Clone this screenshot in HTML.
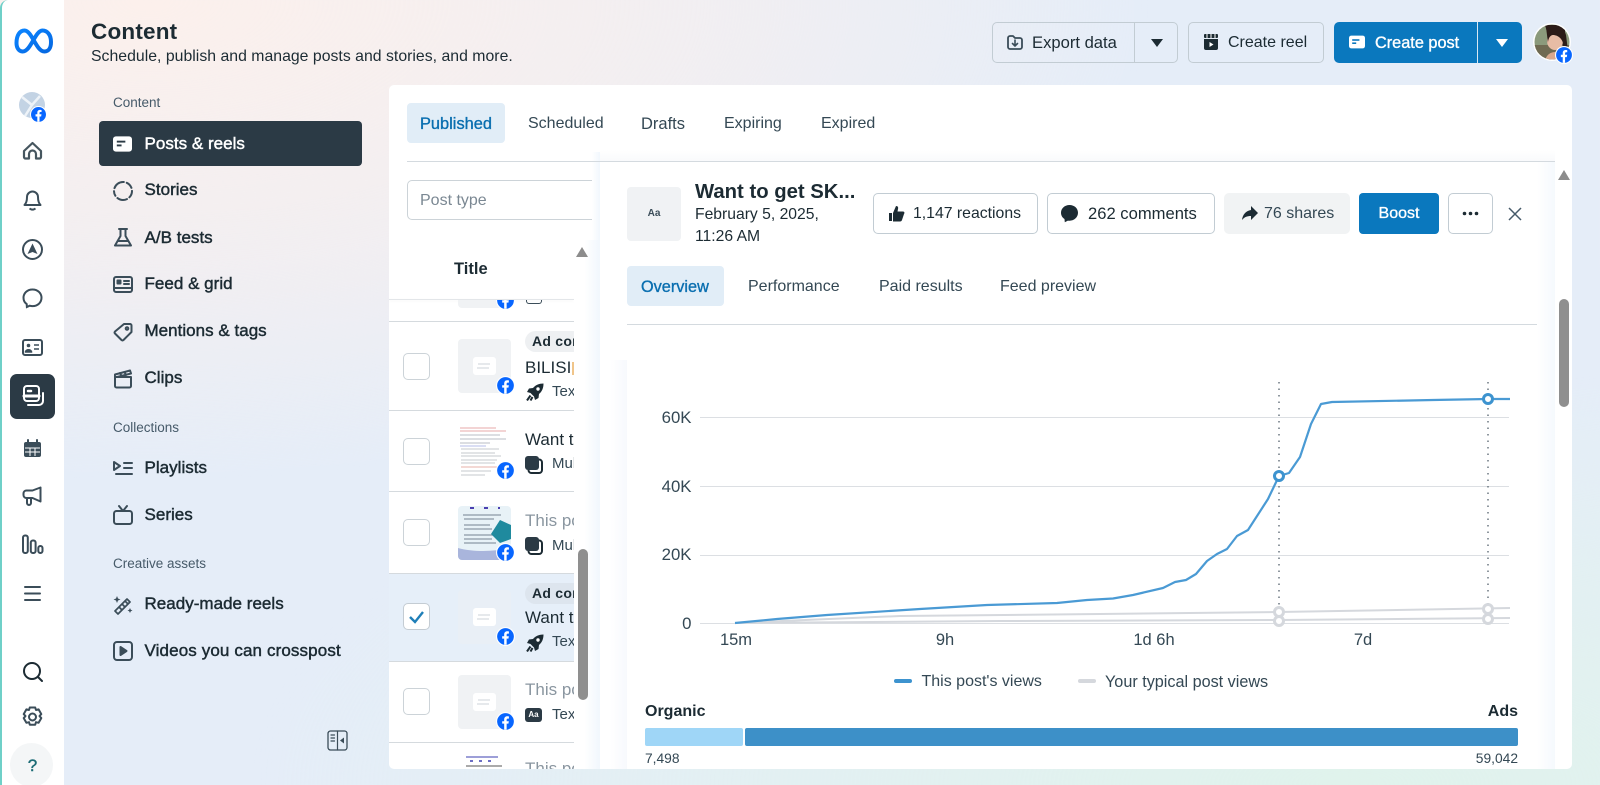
<!DOCTYPE html>
<html lang="en">
<head>
<meta charset="utf-8">
<title>Content</title>
<style>
html,body{margin:0;padding:0;width:1600px;height:785px;overflow:hidden}
body{position:relative;font-family:"Liberation Sans",sans-serif;color:#1c2b33;
background:radial-gradient(ellipse 1000px 480px at 150px 0,#fcf0ec 0%,rgba(252,240,236,.55) 55%,rgba(252,240,236,0) 100%),radial-gradient(ellipse 1100px 420px at 1350px 785px,#e0f3ec 0%,rgba(224,243,236,0) 100%),#e5edf8}
div,span,svg{position:absolute;box-sizing:border-box}
.t{white-space:nowrap;line-height:20px;height:20px}
.m{-webkit-text-stroke:.35px currentColor}
.nav{left:144.500px;font-size:17px;font-weight:400;-webkit-text-stroke:.45px #1c2b33;letter-spacing:.02px}
.lab{left:113px;font-size:13.500px;color:#465a69}
.btn{border:1px solid #c2ccd3;border-radius:5px;height:41px;top:22px}
.tab{font-size:16px;color:#344854}
.ic{fill:none;stroke:#3b4d59;stroke-width:2;stroke-linecap:round;stroke-linejoin:round;overflow:visible}
.cb{left:403px;width:27px;height:27px;border:1px solid #ccd3d8;border-radius:5px;background:#fff}
.th{left:458px;width:53px;height:54px;background:#f0f2f4;border-radius:4px}
.th i{position:absolute;left:15px;top:18px;width:23px;height:18px;background:#fff;border-radius:3px;display:block}
.th i:before{content:"";position:absolute;left:5px;top:6px;width:12px;height:2px;background:#e6e9ec;box-shadow:-1px 4px 0 -0px #e6e9ec}
.rl{left:389px;width:185px;height:1px;background:#d5dade}
.pill{left:525px;width:70px;height:21px;background:#eef0f2;border-radius:11px;font-size:14px;font-weight:700;padding-left:7px;line-height:20px;white-space:nowrap;color:#1c2b33;letter-spacing:.25px}
.rt{left:525px;font-size:17px;color:#1c2b33}
.rs{left:552px;font-size:15px;color:#344854}
.gy{color:#8a96a0}
.ay{right:908.500px;font-size:16.800px;color:#344854;text-align:right}
.ax{font-size:16.500px;color:#344854;text-align:center;width:80px}
.grid{left:700px;width:809px;height:1px;background:#dcdfe3}
</style>
</head>
<body>
<svg width="0" height="0" style="left:0;top:0">
<defs>
<symbol id="fb" viewBox="0 0 20 20"><circle cx="10" cy="10" r="10" fill="#fff"/><circle cx="10" cy="10" r="8.800" fill="#0866ff"/><path d="M8.600 18.700v-6.400H6.500V9.700h2.100V8c0-2.300 1.200-3.500 3.300-3.500.7 0 1.400.1 1.700.2v2.300h-1.200c-1 0-1.200.5-1.200 1.300v1.400h2.300l-.4 2.600h-1.900v6.400z" fill="#fff"/></symbol>
<symbol id="post" viewBox="0 0 20 16"><rect x="0" y="0" width="20" height="16" rx="3" fill="currentColor"/><rect x="4" y="4.500" width="9" height="2" fill="var(--c,#2b3a45)"/><rect x="4" y="8.500" width="5" height="2" fill="var(--c,#2b3a45)"/></symbol>
<symbol id="rocket" viewBox="0 0 18 18"><path d="M17.500.5c-4.500 0-8 1.500-10.500 4.500L3 5.500 1 9l3.500 1L8 13.500l1 3.500 3.500-2 .5-4c3-2.500 4.500-6 4.500-10.500z" fill="#1c2b33"/><circle cx="12" cy="6" r="1.700" fill="#fff"/><path d="M4.500 12.500L1 17.500M6.500 14L4.500 17.500" stroke="#1c2b33" stroke-width="2"/></symbol>
<symbol id="multi" viewBox="0 0 18 18"><rect x="3.500" y="3.500" width="13.500" height="13.500" rx="3" fill="#fff" stroke="#1c2b33" stroke-width="2"/><rect x="0" y="0" width="14" height="14" rx="3" fill="#2b3a45"/></symbol>
</defs>
</svg>

<!-- left rail -->
<div style="left:0;top:0;width:64px;height:785px;background:#fff;border-left:2px solid #6fd0c8;border-top-left-radius:8px"></div>
<svg style="left:0;top:0" width="64" height="785" fill="none">
<defs><linearGradient id="mg" x1="0" y1="0" x2="1" y2="1"><stop offset="0" stop-color="#0a84ff"/><stop offset="1" stop-color="#0668e1"/></linearGradient></defs>
<path d="M16.500 43C16.500 35 20 30.500 24.500 30.500C32 30.500 36 51.500 44.500 51.500C48.500 51.500 51 48 51 42C51 35 47.500 30.500 42.500 30.500C35 30.500 31 51.500 22.500 51.500C19 51.500 16.500 48 16.500 43Z" stroke="url(#mg)" stroke-width="4"/>
<circle cx="32" cy="105" r="13" fill="#c3d3e4"/>
<path d="M22 97l10 8 8-9M32 105l-7 11" stroke="#eef3f8" stroke-width="2.500"/>
<path d="M24 151L32.500 143L41 151V157a1.500 1.500 0 0 1-1.500 1.500H36V154a3.500 3.500 0 0 0-7 0v4.500H25.500A1.500 1.500 0 0 1 24 157Z" stroke="#46565f" stroke-width="2.200" stroke-linejoin="round"/>
<path d="M24.500 205c2-2 2.500-4 2.500-8a5.500 5.500 0 0 1 11 0c0 4 .5 6 2.500 8zM29.500 208.500c2 1.500 4 1.500 6 0" stroke="#3b4d59" stroke-width="2" stroke-linejoin="round"/>
<circle cx="32.500" cy="249.500" r="9.500" stroke="#3b4d59" stroke-width="2"/><path d="M32.500 243.500l5 10.500-5-2-5 2z" fill="#3b4d59"/>
<path d="M32.500 289.500c-5.200 0-9 3.600-9 8.300 0 2.700 1.200 4.900 3.200 6.300l.2 2.900 2.800-1.300c.9.300 1.800.4 2.800.4 5.200 0 9-3.600 9-8.300s-3.800-8.300-9-8.300z" stroke="#3b4d59" stroke-width="2"/>
<rect x="23" y="340" width="19" height="15" rx="2" stroke="#3b4d59" stroke-width="2"/><circle cx="28.500" cy="345.500" r="1.800" fill="#3b4d59"/><path d="M25.500 352c0-3 6-3 6 0zM34 345h5M34 349h5" stroke="#3b4d59" stroke-width="1.500" fill="#3b4d59"/>
<rect x="24" y="442" width="17" height="15" rx="2" fill="#3b4d59"/><path d="M28 440v4M37 440v4" stroke="#3b4d59" stroke-width="2" stroke-linecap="round"/><path d="M25 448h15M25 452h15M30 448v8M35 448v8" stroke="#fff" stroke-width="1"/>
<path d="M40.500 487.500v14l-8-3.500h-6a3 3 0 0 1-3-3v-1.500a3 3 0 0 1 3-3h6zM27 498v5a2 2 0 0 0 4 0v-5" stroke="#3b4d59" stroke-width="2" stroke-linejoin="round"/>
<rect x="23" y="535.500" width="4.800" height="17.500" rx="2" stroke="#3b4d59" stroke-width="2"/><rect x="30.800" y="540.500" width="4.800" height="12.500" rx="2" stroke="#3b4d59" stroke-width="2"/><rect x="38.300" y="546" width="4.200" height="7" rx="2" stroke="#3b4d59" stroke-width="2"/>
<path d="M25 587h15M25 593.500h15M25 600h15" stroke="#3b4d59" stroke-width="2" stroke-linecap="round"/>
<circle cx="32" cy="671" r="8" stroke="#1c2b33" stroke-width="2"/><path d="M38 677l4 4" stroke="#1c2b33" stroke-width="2" stroke-linecap="round"/>
<circle cx="32.500" cy="717" r="3.500" stroke="#3b4d59" stroke-width="2"/><path d="M29.800 707.500h5.400l.8 2.500 2.600-.6 2.700 4.700-1.800 2 1.800 2-2.700 4.700-2.600-.6-.8 2.500h-5.400l-.8-2.500-2.600.6-2.700-4.700 1.800-2-1.800-2 2.700-4.700 2.600.6z" stroke="#3b4d59" stroke-width="2" stroke-linejoin="round"/>
</svg>
<svg style="left:30px;top:106px" width="17" height="17"><use href="#fb"/></svg>
<div style="left:10px;top:374px;width:45px;height:45px;background:#2b3a45;border-radius:7px"></div>
<svg style="left:10px;top:374px" width="44" height="45" fill="none" stroke="#fff" stroke-width="2" stroke-linecap="round"><rect x="14" y="12" width="15" height="15" rx="3" fill="#2b3a45"/><path d="M18 17h3" stroke-width="2.500"/><path d="M14 22h15" stroke-width="3"/><path d="M33 19v8a4 4 0 0 1-4 4H18"/></svg>
<div style="left:10px;top:743px;width:43px;height:44px;background:#f4f6f7;border-radius:50%"></div>
<div class="t" style="left:26px;top:756px;width:13px;text-align:center;font-size:17px;color:#1b6b75;-webkit-text-stroke:.4px #1b6b75">?</div>

<!-- header -->
<div class="t" style="left:91px;top:20px;height:24px;line-height:24px;font-size:22.500px;font-weight:700;letter-spacing:.2px">Content</div>
<div class="t" style="left:91px;top:47px;font-size:15.800px;letter-spacing:.02px">Schedule, publish and manage posts and stories, and more.</div>

<div class="btn" style="left:992px;width:186px"></div>
<div style="left:1134px;top:22px;width:1px;height:41px;background:#c2ccd3"></div>
<svg class="ic" style="left:1006px;top:34px" width="18" height="17"><path d="M2 4a2 2 0 0 1 2-2h3l2 2h5a2 2 0 0 1 2 2v7a2 2 0 0 1-2 2H4a2 2 0 0 1-2-2z" style="stroke-width:1.800"/><path d="M9 6v6M6.500 9.500L9 12l2.500-2.500" style="stroke-width:1.600"/></svg>
<div class="t" style="left:1032px;top:33px;font-size:16.600px;color:#1c2b33">Export data</div>
<svg style="left:1150px;top:38px" width="14" height="10"><path d="M1 1h12L7 9z" fill="#1c2b33"/></svg>
<div class="btn" style="left:1188px;width:136px"></div>
<svg style="left:1203px;top:33px" width="16" height="18"><path d="M1 6h14v9a2 2 0 0 1-2 2H3a2 2 0 0 1-2-2z" fill="#1c2b33"/><rect x="1" y="1" width="14" height="4" rx="1" fill="#1c2b33"/><path d="M4 1v4M8 1v4M12 1v4" stroke="#fff" stroke-width="1"/><path d="M6.500 9l4 2.500-4 2.500z" fill="#fff"/></svg>
<div class="t" style="left:1228px;top:33px;font-size:16px;color:#1c2b33">Create reel</div>
<div style="left:1334px;top:22px;width:188px;height:41px;background:#0a78be;border-radius:5px"></div>
<div style="left:1477px;top:22px;width:1px;height:41px;background:#d8e8f3"></div>
<svg style="left:1349px;top:35px;color:#fff;--c:#0a78be" width="16" height="14"><use href="#post"/></svg>
<div class="t m" style="left:1375px;top:33px;font-size:16.300px;color:#fff">Create post</div>
<svg style="left:1495px;top:38px" width="14" height="10"><path d="M1 1h12L7 9z" fill="#fff"/></svg>
<svg style="left:1533px;top:23px" width="40" height="40">
<defs><clipPath id="av"><circle cx="19" cy="19" r="17.500"/></clipPath></defs>
<circle cx="19" cy="19" r="19" fill="#fff"/>
<g clip-path="url(#av)"><rect width="40" height="40" fill="#8b9a7c"/><rect x="0" y="22" width="40" height="18" fill="#6f6a52"/><path d="M12 2h20v24l-6-10-10 0z" fill="#2c1c18"/><ellipse cx="22" cy="18" rx="8" ry="9" fill="#e7bca5"/><path d="M12 38c2-12 18-12 22 0z" fill="#d8a88e"/><path d="M13 4c6-4 18-2 20 8l2 16-5-2c2-8-4-14-10-14-3 0-5 4-5 8z" fill="#2c1c18"/></g>
</svg>
<svg style="left:1555px;top:46px" width="18" height="18"><use href="#fb"/></svg>

<!-- sidebar nav -->
<div class="t lab" style="left:113px;top:93px">Content</div>
<div style="left:99px;top:121px;width:263px;height:45px;background:#2b3a45;border-radius:4px"></div>
<svg style="left:113px;top:136px;color:#fff;--c:#2b3a45" width="19" height="16"><use href="#post"/></svg>
<div class="t nav" style="top:134px;color:#fff;-webkit-text-stroke-color:#fff">Posts &amp; reels</div>
<svg class="ic" style="left:112px;top:180px" width="22" height="22"><circle cx="11" cy="11" r="9" stroke-dasharray="7 3 10 3 5 3 12 3" /></svg>
<div class="t nav" style="top:180px">Stories</div>
<svg class="ic" style="left:113px;top:228px" width="20" height="19"><path d="M6 1h8M7.500 1v7L2 17.500h16L12.500 8V1M5 13h10"/></svg>
<div class="t nav" style="top:228px">A/B tests</div>
<svg class="ic" style="left:113px;top:276px" width="20" height="18"><rect x="1" y="1" width="18" height="15" rx="2"/><path d="M1 12h18M11 5h5M11 8h5"/><rect x="4.500" y="4.500" width="3" height="3" fill="#3b4d59"/></svg>
<div class="t nav" style="top:274px">Feed &amp; grid</div>
<svg class="ic" style="left:113px;top:322px" width="20" height="20"><path d="M11 2h6a1.500 1.500 0 0 1 1.500 1.500V10L10.500 18a1.500 1.500 0 0 1-2 0l-6.500-6.500a1.500 1.500 0 0 1 0-2z"/><circle cx="14" cy="6.500" r="1.300"/></svg>
<div class="t nav" style="top:321px">Mentions &amp; tags</div>
<svg class="ic" style="left:113px;top:369px" width="20" height="20"><path d="M2 8h16v9a1.500 1.500 0 0 1-1.500 1.500h-13A1.500 1.500 0 0 1 2 17zM2 8V5.500L17 1.500l1 3-14 3.500"/><path d="M7 4l1.500 3M11.500 3l1.500 3" /></svg>
<div class="t nav" style="top:368px">Clips</div>

<div class="t lab" style="top:418px">Collections</div>
<svg class="ic" style="left:113px;top:461px" width="20" height="14"><path d="M1 1l6 4-6 4zM11 2h8M11 7h8M3 13h16"/></svg>
<div class="t nav" style="top:458px">Playlists</div>
<svg class="ic" style="left:113px;top:505px" width="20" height="20"><rect x="1" y="6" width="18" height="13" rx="2.500"/><path d="M6 1l4 5 4-5"/></svg>
<div class="t nav" style="top:505px">Series</div>
<div class="t lab" style="top:554px">Creative assets</div>
<svg class="ic" style="left:112px;top:594px" width="22" height="22"><path d="M3 17L15 5l3 3L6 20zM7 13l3 3M10 10l3 3M13 7l3 3" style="stroke-width:1.700"/><path d="M5 2l1 2.500 2.500 1-2.500 1L5 9l-1-2.500L1.500 5.500l2.500-1z" fill="#3b4d59" stroke="none"/><path d="M18 14l.8 1.700 1.700.8-1.700.8-.8 1.700-.8-1.700-1.700-.8 1.700-.8z" fill="#3b4d59" stroke="none"/></svg>
<div class="t nav" style="top:594px">Ready-made reels</div>
<svg class="ic" style="left:113px;top:641px" width="20" height="20"><rect x="1" y="1" width="18" height="18" rx="3"/><path d="M7.500 6l6 4-6 4z" fill="#3b4d59"/></svg>
<div class="t nav" style="top:641px;letter-spacing:.12px">Videos you can crosspost</div>
<svg class="ic" style="left:327px;top:730px" width="21" height="21"><rect x="1" y="1" width="19" height="19" rx="2.500" style="stroke-width:1.300"/><path d="M10.500 1v19M4 5h3.500M4 8h3.500M4 11h3.500" style="stroke-width:1.200"/><path d="M17 7.500v6l-4-3z" fill="#3b4d59" stroke="none"/></svg>

<!-- main panel -->
<div style="left:389px;top:85px;width:1183px;height:684px;background:#fff;border-radius:5px"></div>
<div style="left:407px;top:103px;width:98px;height:40px;background:#e1edf7;border-radius:4px"></div>
<div class="t tab m" style="left:420px;top:114px;color:#0a6fb0;font-size:16.400px">Published</div>
<div class="t tab" style="left:528px;top:114px">Scheduled</div>
<div class="t tab" style="left:641px;top:114px;font-size:16.500px">Drafts</div>
<div class="t tab" style="left:724px;top:114px">Expiring</div>
<div class="t tab" style="left:821px;top:114px">Expired</div>
<div style="left:407px;top:161px;width:1148px;height:1px;background:#d4dadf"></div>

<div style="left:407px;top:180px;width:200px;height:40px;border:1px solid #ccd3d8;border-radius:5px;background:#fff"></div>
<div class="t" style="left:420px;top:191px;font-size:16px;color:#7b8893">Post type</div>
<div class="t" style="left:454px;top:259px;font-size:16.500px;font-weight:700">Title</div>
<div style="left:389px;top:299px;width:185px;height:1px;background:#e3e6e9;box-shadow:0 1px 3px rgba(0,0,0,.06)"></div>

<!-- residual row -->
<div style="left:458px;top:300px;width:53px;height:8px;background:#f0f2f4;border-radius:0 0 4px 4px"></div>
<div style="left:495.500px;top:300px;width:19px;height:10px;overflow:hidden"><svg style="left:0;top:-9px" width="19" height="19"><use href="#fb"/></svg></div>
<div style="left:526px;top:300px;width:16px;height:4px;border:1.500px solid #3b4d59;border-top:0;border-radius:0 0 3px 3px"></div>
<div class="rl" style="top:321px"></div>
<div class="rl" style="top:410px"></div>
<div class="rl" style="top:491px"></div>
<div class="rl" style="top:573px"></div>
<div class="rl" style="top:661px"></div>
<div class="rl" style="top:742px"></div>

<!-- rows -->
<div class="cb" style="top:353px"></div>
<div class="th" style="top:339px"><i></i></div>
<svg style="left:495.500px;top:376px" width="19" height="19"><use href="#fb"/></svg>
<div class="pill" style="top:331px">Ad content</div>
<div class="t rt" style="top:358px">BILISI</div>
<div style="left:572px;top:362px;width:2px;height:13px;background:#f0c58a"></div>
<svg style="left:526px;top:383px" width="18" height="18"><use href="#rocket"/></svg>
<div class="t rs" style="top:382px">Text</div>

<div class="cb" style="top:438px"></div>
<div class="th" style="top:425px;background:#fff">
<svg width="53" height="54" style="left:0;top:0"><g stroke-width="1"><path d="M2 3h36M2 6h46" stroke="#e7a9a9"/><path d="M2 10h40M2 14h46M2 18h30" stroke="#b9bcc4"/><path d="M2 21h26" stroke="#b4bde8"/><path d="M3 24h38M3 28h34M3 31h40M3 35h36M3 38h34" stroke="#c5c8cd"/><path d="M3 42h40" stroke="#e7b2a9"/><path d="M3 46h30M3 50h24" stroke="#c5c8cd"/></g></svg></div>
<svg style="left:495.500px;top:461px" width="19" height="19"><use href="#fb"/></svg>
<div class="t rt" style="top:430px">Want to</div>
<svg style="left:525px;top:456px" width="18" height="18"><use href="#multi"/></svg>
<div class="t rs" style="top:454px">Multi</div>

<div class="cb" style="top:519px"></div>
<div class="th" style="top:506px;background:#e8f2f7;overflow:hidden">
<svg width="53" height="54" style="left:0;top:0"><path d="M12 2h30" stroke="#4a3fb0" stroke-width="2" stroke-dasharray="4 10"/><path d="M5 9h38M6 13h30M6 19h26M6 23h28M6 29h30M6 33h28M6 37h32" stroke="#8c99a6" stroke-width="1.200"/><path d="M0 42c15 4 35 4 53 0v12H0z" fill="#a9b5dc"/><path d="M42 14l11 5v14l-11 4-9-9z" fill="#1f8a9e"/></svg></div>
<svg style="left:495.500px;top:543px" width="19" height="19"><use href="#fb"/></svg>
<div class="t rt gy" style="top:511px">This post</div>
<svg style="left:525px;top:537px" width="18" height="18"><use href="#multi"/></svg>
<div class="t rs" style="top:536px">Multi</div>

<div style="left:389px;top:574px;width:185px;height:87px;background:#e6eff9"></div>
<div class="cb" style="top:603px;border-color:#c4ccd3"></div>
<svg style="left:408px;top:610px" width="17" height="14"><path d="M2 7l5 5 8-10" fill="none" stroke="#1f7fb8" stroke-width="2.400"/></svg>
<div class="th" style="top:590px;background:#e9eff6"><i></i></div>
<svg style="left:495.500px;top:627px" width="19" height="19"><use href="#fb"/></svg>
<div class="pill" style="top:583px;background:#dde5ee">Ad content</div>
<div class="t rt" style="top:608px">Want to</div>
<svg style="left:526px;top:634px" width="18" height="18"><use href="#rocket"/></svg>
<div class="t rs" style="top:632px">Text</div>

<div class="cb" style="top:688px"></div>
<div class="th" style="top:675px"><i></i></div>
<svg style="left:495.500px;top:712px" width="19" height="19"><use href="#fb"/></svg>
<div class="t rt gy" style="top:680px">This post</div>
<div style="left:525px;top:708px;width:17px;height:14px;background:#2b3a45;border-radius:3px;color:#fff;font-size:8px;font-weight:700;text-align:center;line-height:14px">Aa</div>
<div class="t rs" style="top:705px">Text</div>

<div style="left:458px;top:755px;width:53px;height:14px;overflow:hidden"><svg width="53" height="14" style="left:0;top:0"><path d="M8 2h32" stroke="#3b3fb0" stroke-width="1"/><path d="M12 6h24" stroke="#3b3fb0" stroke-width="1.500" stroke-dasharray="3 6"/><path d="M8 11h36" stroke="#555" stroke-width="1"/></svg></div>
<div style="left:525px;top:762px;width:49px;height:7px;overflow:hidden"><span class="t rt gy" style="left:0;top:-3px">This post</span></div>

<!-- detail slide-over -->
<div style="left:574px;top:240px;width:26px;height:529px;background:linear-gradient(90deg,#fff 0%,#fff 40%,#f1f7fd 100%)"></div>
<div style="left:592px;top:152px;width:8px;height:88px;background:linear-gradient(90deg,#fff,#f1f7fd)"></div>
<div style="left:600px;top:150px;width:955px;height:11px;background:linear-gradient(#fff,#f9fafc)"></div>
<div style="left:407px;top:161px;width:1148px;height:1px;background:#d4dadf"></div>
<div style="left:600px;top:162px;width:937px;height:607px;background:#fff"></div>
<div style="left:1537px;top:162px;width:18px;height:607px;background:linear-gradient(90deg,#fff,#f5f9fd)"></div>
<div style="left:610px;top:360px;width:17px;height:409px;background:linear-gradient(90deg,#fff,#f7f9fd)"></div>
<svg style="left:576px;top:247px" width="12" height="10"><path d="M6 0l6 10H0z" fill="#8c8c8c"/></svg>
<div style="left:578px;top:549px;width:10px;height:151px;background:#8f8f8f;border-radius:5px"></div>
<svg style="left:1558px;top:170px" width="12" height="10"><path d="M6 0l6 10H0z" fill="#8c8c8c"/></svg>
<div style="left:1559px;top:299px;width:10px;height:108px;background:#8f8f8f;border-radius:5px"></div>

<div style="left:627px;top:187px;width:54px;height:54px;background:#f0f2f4;border-radius:4px;text-align:center;line-height:54px;font-size:10px;font-weight:700;color:#3b4d59">Aa</div>
<div class="t" style="left:695px;top:180px;height:24px;line-height:24px;font-size:20.300px;font-weight:700">Want to get SK...</div>
<div class="t" style="left:695px;top:205px;font-size:15.700px">February 5, 2025,</div>
<div class="t" style="left:695px;top:227px;font-size:15.700px">11:26 AM</div>

<div class="btn" style="left:873px;top:193px;width:165px;height:41px"></div>
<svg style="left:888px;top:205px" width="17" height="17"><path d="M1 8h3v8H1zM5 8l3-7c2 0 2.500 1.500 2 3l-.5 2.500H15c1.500 0 1.800 1.500 1 2.500l-2 6c-.3 1-1 1.500-2 1.500H5z" fill="#1c2b33"/></svg>
<div class="t" style="left:913px;top:204px;font-size:15.800px">1,147 reactions</div>
<div class="btn" style="left:1047px;top:193px;width:168px;height:41px"></div>
<svg style="left:1061px;top:205px" width="17" height="18"><path d="M8.500 0C3.800 0 0 3.300 0 7.800c0 2.800 1.500 5 3.500 6.200l.3 3.300 3.100-1.700c.5.100 1 .1 1.600.1 4.700 0 8.500-3.300 8.500-7.900S13.200 0 8.500 0z" fill="#1c2b33"/></svg>
<div class="t" style="left:1088px;top:204px;font-size:16.600px">262 comments</div>
<div style="left:1224px;top:193px;width:126px;height:41px;background:#f1f3f4;border-radius:5px"></div>
<svg style="left:1242px;top:206px" width="16" height="15"><path d="M9 0l7 7-7 7v-4C5 10 2.500 11 0 14c.5-5 3.500-9 9-10z" fill="#1c2b33"/></svg>
<div class="t" style="left:1264px;top:204px;font-size:16px;color:#344854">76 shares</div>
<div style="left:1359px;top:193px;width:80px;height:41px;background:#0a78be;border-radius:4px;color:#fff;font-size:16px;text-align:center;line-height:42px;-webkit-text-stroke:.35px #fff">Boost</div>
<div class="btn" style="left:1448px;top:193px;width:45px;height:41px"></div>
<svg style="left:1462px;top:211px" width="17" height="5"><circle cx="2.500" cy="2.500" r="1.800" fill="#1c2b33"/><circle cx="8.500" cy="2.500" r="1.800" fill="#1c2b33"/><circle cx="14.500" cy="2.500" r="1.800" fill="#1c2b33"/></svg>
<svg style="left:1508px;top:207px" width="14" height="14"><path d="M1 1l12 12M13 1L1 13" stroke="#465a69" stroke-width="1.500"/></svg>

<div style="left:627px;top:266px;width:97px;height:40px;background:#e1edf7;border-radius:4px"></div>
<div class="t tab m" style="left:641px;top:277px;color:#0a6fb0;font-size:16.300px">Overview</div>
<div class="t tab" style="left:748px;top:277px">Performance</div>
<div class="t tab" style="left:879px;top:277px">Paid results</div>
<div class="t tab" style="left:1000px;top:277px">Feed preview</div>
<div style="left:627px;top:324px;width:910px;height:1px;background:#d4dadf"></div>

<!-- chart -->
<div class="grid" style="top:417px"></div>
<div class="grid" style="top:486px"></div>
<div class="grid" style="top:555px"></div>
<div class="grid" style="top:623px"></div>
<div class="t ay" style="top:408px">60K</div>
<div class="t ay" style="top:477px">40K</div>
<div class="t ay" style="top:545px">20K</div>
<div class="t ay" style="top:614px">0</div>
<div class="t ax" style="left:696px;top:630px">15m</div>
<div class="t ax" style="left:905px;top:630px">9h</div>
<div class="t ax" style="left:1114px;top:630px">1d 6h</div>
<div class="t ax" style="left:1323px;top:630px">7d</div>
<svg style="left:0;top:0" width="1600" height="785" fill="none">
<path d="M1279 382V606M1488 382V606" stroke="#6b7680" stroke-width="1.500" stroke-dasharray="1.500 5"/>
<path d="M735 623L900 616L1100 614L1279 612L1510 608" stroke="#d5d8dd" stroke-width="2"/>
<path d="M735 623L1000 621L1279 620L1510 618" stroke="#d5d8dd" stroke-width="2"/>
<path d="M735 623L777 619L827 615L920 609L987 605L1057 603L1087 600L1113 598.500L1133 595L1163 588L1175 582L1186 580L1196 574L1207 561L1217 554L1227 549L1237 536L1248 530L1268 499L1279 476L1289 473L1300 457L1311 424L1321 404L1332 402L1433 400L1488 399L1510 399" stroke="#4a9ad4" stroke-width="2.200" stroke-linejoin="round"/>
<circle cx="1279" cy="476" r="4.500" fill="#fff" stroke="#3d93cf" stroke-width="3"/>
<circle cx="1488" cy="399" r="4.500" fill="#fff" stroke="#3d93cf" stroke-width="3"/>
<circle cx="1279" cy="612" r="4.500" fill="#fff" stroke="#d5d8dd" stroke-width="3"/>
<circle cx="1279" cy="621" r="4.500" fill="#fff" stroke="#d5d8dd" stroke-width="3"/>
<circle cx="1488" cy="609" r="4.500" fill="#fff" stroke="#d5d8dd" stroke-width="3"/>
<circle cx="1488" cy="619" r="4.500" fill="#fff" stroke="#d5d8dd" stroke-width="3"/>
</svg>
<div style="left:894px;top:679px;width:18px;height:4px;background:#3d93cf;border-radius:2px"></div>
<div class="t" style="left:921.500px;top:672px;font-size:16px;color:#344854">This post's views</div>
<div style="left:1078px;top:679px;width:18px;height:4px;background:#d5d8dd;border-radius:2px"></div>
<div class="t" style="left:1105px;top:672px;font-size:16.200px;color:#344854">Your typical post views</div>
<div class="t" style="left:645px;top:702px;font-size:16px;font-weight:700">Organic</div>
<div class="t" style="left:1418px;width:100px;text-align:right;top:702px;font-size:16px;font-weight:700">Ads</div>
<div style="left:645px;top:728px;width:98px;height:18px;background:#9fd6f7;border-radius:2px"></div>
<div style="left:745px;top:728px;width:773px;height:18px;background:#3d90c8;border-radius:2px"></div>
<div class="t" style="left:645px;top:749px;font-size:13.800px;color:#344854">7,498</div>
<div class="t" style="left:1418px;width:100px;text-align:right;top:749px;font-size:13.800px;color:#344854">59,042</div>
</body>
</html>
